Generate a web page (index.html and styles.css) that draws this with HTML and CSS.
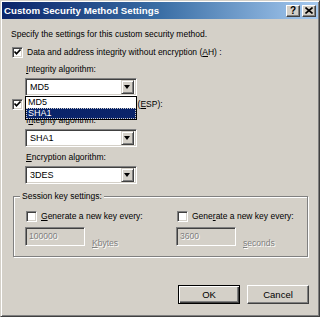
FILE: index.html
```html
<!DOCTYPE html>
<html lang="en">
<head>
    <meta charset="UTF-8">
    <title>Custom Security Method Settings</title>
    <link rel="stylesheet" href="styles.css">
</head>
<body>

<div class="window">
    <!-- Title bar -->
    <div class="titlebar">
        <span class="title">Custom Security Method Settings</span>
        <div class="title-btns">
            <span class="tbtn">?</span>
            <span class="tbtn close">
                <svg width="8" height="7" viewBox="0 0 8 7"><path d="M0.5 0.5 L7.5 6.5 M7.5 0.5 L0.5 6.5" stroke="#000" stroke-width="1.6"/></svg>
            </span>
        </div>
    </div>

    <div class="content">
        <div class="intro">Specify the settings for this custom security method.</div>

        <div class="check-row row-ah">
            <span class="box"><svg width="9" height="9" viewBox="0 0 9 9"><path d="M1.5 3.5 L3.5 5.8 L7.5 1.5" fill="none" stroke="#000" stroke-width="1.7"/></svg></span>
            <span>Data and address integrity without encryption (<u>A</u>H) :</span>
        </div>

        <div class="field">
            <div class="field-label"><u>I</u>ntegrity algorithm:</div>
            <div class="combo-wrap">
                <div class="combo"><span class="combo-text">MD5</span><span class="drop"></span></div>
                <!-- open dropdown list -->
                <div class="list">
                    <div class="list-item">MD5</div>
                    <div class="list-item selected">SHA1</div>
                </div>
            </div>
        </div>

        <div class="check-row row-esp">
            <span class="box"><svg width="9" height="9" viewBox="0 0 9 9"><path d="M1.5 3.5 L3.5 5.8 L7.5 1.5" fill="none" stroke="#000" stroke-width="1.7"/></svg></span>
            <span>Data integrity and encryption (<u>E</u>SP):</span>
        </div>

        <div class="field sub">
            <div class="field-label">I<u>n</u>tegrity algorithm:</div>
            <div class="combo"><span class="combo-text">SHA1</span><span class="drop"></span></div>
        </div>

        <div class="field sub">
            <div class="field-label"><u>E</u>ncryption algorithm:</div>
            <div class="combo"><span class="combo-text">3DES</span><span class="drop"></span></div>
        </div>

        <div class="group">
            <div class="legend">Session key settings:</div>
            <div class="group-cols">
                <div class="col">
                    <div class="check-row">
                        <span class="box"></span>
                        <span><u>G</u>enerate a new key every:</span>
                    </div>
                    <div class="edit-row">
                        <span class="edit">100000</span>
                        <span class="unit dim"><u>K</u>bytes</span>
                    </div>
                </div>
                <div class="col">
                    <div class="check-row">
                        <span class="box"></span>
                        <span>Gene<u>r</u>ate a new key every:</span>
                    </div>
                    <div class="edit-row">
                        <span class="edit">3600</span>
                        <span class="unit dim"><u>s</u>econds</span>
                    </div>
                </div>
            </div>
        </div>

        <div class="buttons">
            <button class="btn default">OK</button>
            <button class="btn">Cancel</button>
        </div>
    </div>
</div>

</body>
</html>
```

FILE: styles.css
```css
* {
    margin: 0;
    padding: 0;
    box-sizing: border-box;
}

body {
    background-color: #d4d0c8;
    font-family: 'Liberation Sans', Arial, sans-serif;
    font-size: 8.5px;
    color: #000;
}

u {
    text-decoration: underline;
    text-underline-offset: 1px;
}

.window {
    width: 320px;
    height: 317px;
    padding: 1px;
    background-color: #d4d0c8;
    border: 1px solid;
    border-color: #d4d0c8 #404040 #404040 #d4d0c8;
    box-shadow: inset 1px 1px 0 #fff, inset -1px -1px 0 #808080;
}

/* Title bar */
.titlebar {
    height: 17px;
    display: flex;
    align-items: center;
    justify-content: space-between;
    padding: 0 2px 0 2px;
    background: linear-gradient(to right, #0a246a, #3a6ea5 50%, #a6caf0);
}

.title {
    color: #fff;
    font-weight: bold;
    font-size: 9.7px;
}

.title-btns {
    display: flex;
    gap: 2px;
}

.tbtn {
    width: 14px;
    height: 12px;
    display: flex;
    align-items: center;
    justify-content: center;
    background-color: #d4d0c8;
    border: 1px solid;
    border-color: #fff #404040 #404040 #fff;
    box-shadow: inset -1px -1px 0 #808080;
    font-weight: bold;
    font-size: 10px;
    line-height: 1;
}

/* Content */
.content {
    padding: 9px 9px 0 9px;
}

.intro {
    line-height: 12px;
}

.check-row {
    display: flex;
    align-items: center;
    gap: 4px;
    line-height: 12px;
}

.row-ah {
    margin-top: 6px;
    margin-left: 1px;
}

.row-esp {
    margin-top: 2px;
    margin-left: 1px;
}

.box {
    width: 11px;
    height: 11px;
    flex-shrink: 0;
    display: flex;
    align-items: center;
    justify-content: center;
    background-color: #fff;
    border: 1px solid;
    border-color: #808080 #fff #fff #808080;
    box-shadow: inset 1px 1px 0 #404040, inset -1px -1px 0 #d4d0c8;
}

.field {
    margin-left: 14px;
    margin-top: 5px;
}

.field.sub {
    margin-top: 4px;
}

.field-label {
    line-height: 12px;
    margin-bottom: 3px;
    margin-left: 1px;
}

.combo-wrap {
    position: relative;
}

.combo {
    width: 112px;
    height: 18px;
    display: flex;
    align-items: center;
    justify-content: space-between;
    padding: 2px;
    background-color: #fff;
    border: 1px solid;
    border-color: #808080 #fff #fff #808080;
    box-shadow: inset 1px 1px 0 #404040, inset -1px -1px 0 #d4d0c8;
}

.combo-text {
    padding-left: 2px;
    line-height: 12px;
    font-size: 9px;
}

.drop {
    width: 13px;
    height: 14px;
    position: relative;
    background-color: #d4d0c8;
    border: 1px solid;
    border-color: #d4d0c8 #404040 #404040 #d4d0c8;
    box-shadow: inset 1px 1px 0 #fff, inset -1px -1px 0 #808080;
}

.drop::after {
    content: "";
    position: absolute;
    left: 2px;
    top: 4px;
    border-left: 3.5px solid transparent;
    border-right: 3.5px solid transparent;
    border-top: 4px solid #000;
}

/* open dropdown list, drawn over the rows below */
.list {
    position: absolute;
    left: 0;
    top: 18px;
    width: 112px;
    background-color: #fff;
    border: 1px solid #000;
    z-index: 2;
    font-size: 9px;
}

.list-item {
    height: 11px;
    line-height: 11px;
    padding-left: 2px;
}

.list-item.selected {
    background-color: #0a246a;
    color: #fff;
    outline: 1px dotted #d4d0c8;
    outline-offset: -1px;
}

/* Session key group */
.group {
    position: relative;
    margin-top: 12px;
    margin-left: 2px;
    width: 295px;
    height: 61px;
    border: 1px solid #808080;
    box-shadow: inset 1px 1px 0 #fff, 1px 1px 0 #fff;
    padding: 13px 0 0 11px;
}

.legend {
    position: absolute;
    left: 6px;
    top: -7px;
    padding: 0 2px;
    line-height: 12px;
    background-color: #d4d0c8;
}

.group-cols {
    display: flex;
}

.col {
    width: 151px;
    flex-shrink: 0;
}

.col .check-row {
    margin-left: 1px;
}

.edit-row {
    display: flex;
    align-items: flex-end;
    gap: 7px;
    margin-top: 5px;
}

.edit {
    width: 60px;
    height: 19px;
    padding: 2px 3px;
    line-height: 13px;
    color: #808080;
    text-shadow: 1px 1px 0 #fff;
    background-color: #d4d0c8;
    border: 1px solid;
    border-color: #808080 #fff #fff #808080;
    box-shadow: inset 1px 1px 0 #404040, inset -1px -1px 0 #d4d0c8;
}

.unit {
    line-height: 12px;
    margin-bottom: -3px;
}

.dim {
    color: #808080;
    text-shadow: 1px 1px 0 #fff;
}

/* Buttons */
.buttons {
    display: flex;
    justify-content: flex-end;
    gap: 7px;
    margin-top: 28px;
}

.btn {
    width: 62px;
    height: 19px;
    font-family: 'Liberation Sans', Arial, sans-serif;
    font-size: 9.5px;
    background-color: #d4d0c8;
    border: 1px solid;
    border-color: #fff #404040 #404040 #fff;
    box-shadow: inset -1px -1px 0 #808080;
}

.btn.default {
    border: 1px solid #000;
    box-shadow: inset 1px 1px 0 #fff, inset -1px -1px 0 #404040, inset -2px -2px 0 #808080;
}
```
